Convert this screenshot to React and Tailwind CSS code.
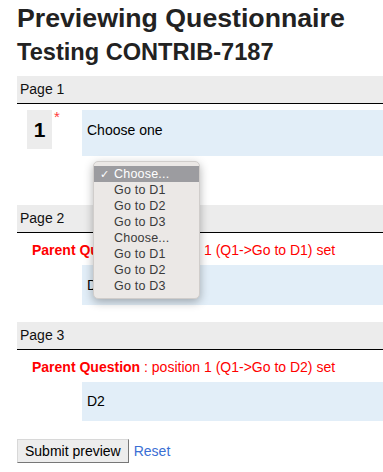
import React from 'react';

const OPTIONS = ['Choose...', 'Go to D1', 'Go to D2', 'Go to D3', 'Choose...', 'Go to D1', 'Go to D2', 'Go to D3'];

function PageBar({ label }) {
  return (
    <div className="h-[28px] bg-[#ececec] border-b border-black pl-[3px] flex items-center text-[14px] text-[#111]">
      {label}
    </div>
  );
}

function ParentLine({ target }) {
  return (
    <div className="pl-[15px] h-[17px] text-[14px] leading-[17px] text-[#ff0000]">
      <span className="font-bold">Parent Question</span> : position 1 (Q1-&gt;{target}) set
    </div>
  );
}

// native select popup, drawn over the page
function SelectMenu() {
  return (
    <div className="absolute left-[93px] top-[161px] w-[107px] rounded-[5px] bg-[#ebe8e6] shadow-[0_3px_10px_rgba(0,0,0,0.3)] border border-[#d0cdcb] py-[4px] text-[12.5px] text-[#3a3a3a]">
      {OPTIONS.map((o, i) => (
        <div
          key={i}
          className={`h-[16px] leading-[16px] flex items-center ${i === 0 ? 'bg-[#9c9ca0] text-white' : ''}`}
        >
          <span className="w-[20px] pl-[6px] text-[11px]">{i === 0 ? '✓' : ''}</span>
          <span className="tracking-[0.2px]">{o}</span>
        </div>
      ))}
    </div>
  );
}

export default function App() {
  return (
    <div className="relative w-[383px] h-[472px] overflow-hidden bg-white" style={{ fontFamily: '"Liberation Sans", Arial, sans-serif' }}>
      <div className="pl-[17px] w-[400px]">
        <h1 className="text-[26.7px] font-bold leading-[32px] pt-[2px] text-[#222]">Previewing Questionnaire</h1>
        <h2 className="text-[23.6px] font-bold leading-[28px] mt-[4px] text-[#222]">Testing CONTRIB-7187</h2>

        <div className="mt-[10px]">
          <PageBar label="Page 1" />
          <div className="flex mt-[6px]">
            <div className="ml-[10px] w-[25px] h-[39px] bg-[#ececec] flex items-center justify-center text-[21px] font-bold text-black">1</div>
            <div className="w-[30px] pl-[2px] text-[15px] leading-[14px] text-[#ff3b3b]">*</div>
            <div className="flex-1 h-[46px] bg-[#e2eef8] pl-[5px] pt-[10px] text-[14px] text-black">Choose one</div>
          </div>
        </div>

        <div className="mt-[49px]">
          <PageBar label="Page 2" />
          <div className="mt-[9px]"><ParentLine target="Go to D1" /></div>
          <div className="ml-[65px] mt-[6px] h-[40px] bg-[#e2eef8] pl-[5px] flex items-center text-[14px] text-black">D1</div>
        </div>

        <div className="mt-[17px]">
          <PageBar label="Page 3" />
          <div className="mt-[9px]"><ParentLine target="Go to D2" /></div>
          <div className="ml-[65px] mt-[6px] h-[39px] bg-[#e2eef8] pl-[5px] flex items-center text-[14px] text-black">D2</div>
        </div>

        <div className="flex items-center mt-[18px] gap-[5px]">
          <button className="h-[24px] px-[7px] bg-[#ededed] border border-t-[#d8d8d8] border-l-[#d8d8d8] border-r-[#777] border-b-[#777] text-[14px] text-black">
            Submit preview
          </button>
          <a href="#" className="text-[14px] text-[#3b6fd4]">Reset</a>
        </div>
      </div>
      <SelectMenu />
    </div>
  );
}
